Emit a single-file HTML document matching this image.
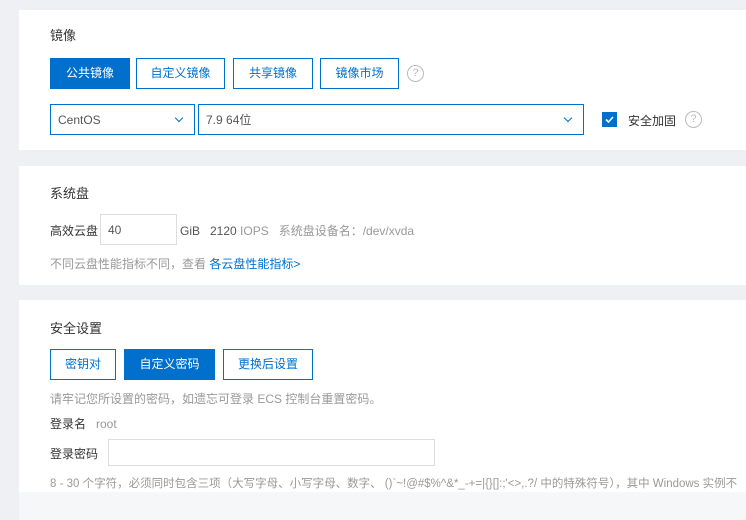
<!DOCTYPE html>
<html><head><meta charset="utf-8"><style>
*{margin:0;padding:0;box-sizing:border-box}
body{width:746px;height:520px;overflow:hidden;background:#eff0f3;font-family:"Liberation Sans","Noto Sans CJK SC",sans-serif;font-size:12px;color:#333;position:relative}
.card{position:absolute;left:19px;right:0;background:#fff}
.a{position:absolute;white-space:nowrap}
.btn{position:absolute;height:31px;border:1px solid #0070cc;color:#0070cc;background:#fff;text-align:center;line-height:29px;font-size:12px}
.btn.on{background:#0070cc;color:#fff}
.q{position:absolute;width:17px;height:17px;border:1px solid #bbb;border-radius:50%;color:#bbb;font-size:11px;text-align:center;line-height:15px}
.sel{position:absolute;height:31px;border:1px solid #0070cc;background:#fff;line-height:29px;padding-left:7px;color:#555}
.chev{position:absolute;right:12px;top:10px;width:6px;height:6px;border-right:1px solid #0070cc;border-bottom:1px solid #0070cc;transform:rotate(45deg)}
.gray{color:#999}
</style></head><body>
<div class="card" style="top:10px;height:140px"></div>
<div class="a" style="left:50px;top:25px;font-size:13px">镜像</div>
<div class="btn on" style="left:50px;top:58px;width:80px">公共镜像</div>
<div class="btn" style="left:136px;top:58px;width:89px">自定义镜像</div>
<div class="btn" style="left:233px;top:58px;width:80px">共享镜像</div>
<div class="btn" style="left:320px;top:58px;width:79px">镜像市场</div>
<div class="q" style="left:407px;top:65px">?</div>
<div class="sel" style="left:50px;top:104px;width:145px;padding-top:1px">CentOS<span class="chev"></span></div>
<div class="sel" style="left:198px;top:104px;width:386px;padding-top:1px">7.9 64位<span class="chev"></span></div>
<div class="a" style="left:602px;top:112px;width:15px;height:15px;background:#0070cc"><svg width="15" height="15"><path d="M4 7.5l2.5 2.5 4.5-5" stroke="#fff" stroke-width="1.6" fill="none"/></svg></div>
<div class="a" style="left:628px;top:112px">安全加固</div>
<div class="q" style="left:685px;top:111px">?</div>

<div class="card" style="top:166px;height:119px"></div>
<div class="a" style="left:50px;top:183px;font-size:13px">系统盘</div>
<div class="a" style="left:50px;top:222px">高效云盘</div>
<div class="a" style="left:100px;top:214px;width:77px;height:31px;border:1px solid #ddd;padding:8px 0 0 7px;color:#555">40</div>
<div class="a" style="left:180px;top:222px;color:#555">GiB &nbsp;&nbsp;2120 <span class="gray">IOPS &nbsp;&nbsp;系统盘设备名：/dev/xvda</span></div>
<div class="a gray" style="left:50px;top:255px">不同云盘性能指标不同，查看 <span style="color:#0070cc">各云盘性能指标&gt;</span></div>

<div class="card" style="top:300px;height:220px"></div>
<div class="a" style="left:50px;top:318px;font-size:13px">安全设置</div>
<div class="btn" style="left:50px;top:349px;width:66px">密钥对</div>
<div class="btn on" style="left:124px;top:349px;width:91px">自定义密码</div>
<div class="btn" style="left:223px;top:349px;width:90px">更换后设置</div>
<div class="a gray" style="left:50px;top:390px">请牢记您所设置的密码，如遗忘可登录 ECS 控制台重置密码。</div>
<div class="a" style="left:50px;top:415px">登录名 <span class="gray">&nbsp;&nbsp;root</span></div>
<div class="a" style="left:50px;top:445px">登录密码</div>
<div class="a" style="left:108px;top:439px;width:327px;height:27px;border:1px solid #ddd"></div>
<div class="a gray" style="left:50px;top:475px;font-size:11.5px">8 - 30 个字符，必须同时包含三项（大写字母、小写字母、数字、 ()`~!@#$%^&amp;*_-+=|{}[]:;'&lt;&gt;,.?/ 中的特殊符号），其中 Windows 实例不</div>
<div class="a" style="left:19px;top:492px;right:0;height:28px;background:#f6f7f9"></div>
</body></html>
